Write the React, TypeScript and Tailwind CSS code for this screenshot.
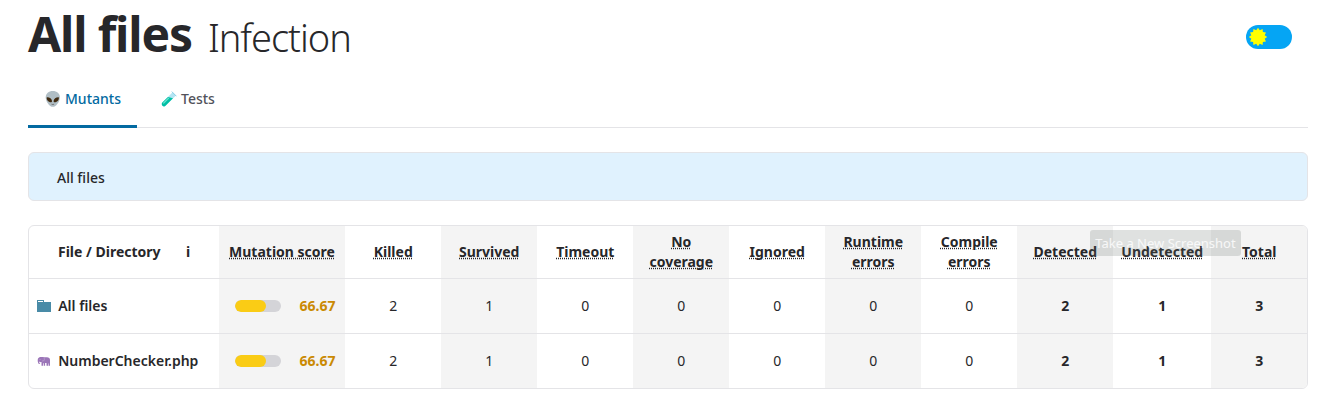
import React from "react";

type Row = { name: string; kind: "folder" | "php"; score: number; counts: number[]; totals: number[] };

const columns = [
  "Killed",
  "Survived",
  "Timeout",
  "No coverage",
  "Ignored",
  "Runtime errors",
  "Compile errors",
  "Detected",
  "Undetected",
  "Total",
];

const rows: Row[] = [
  { name: "All files", kind: "folder", score: 66.67, counts: [2, 1, 0, 0, 0, 0, 0], totals: [2, 1, 3] },
  { name: "NumberChecker.php", kind: "php", score: 66.67, counts: [2, 1, 0, 0, 0, 0, 0], totals: [2, 1, 3] },
];

const gridCols = "grid grid-cols-[190px_126px_repeat(8,96px)_98px_96px]";

function AlienIcon() {
  return (
    <svg width="16" height="16" viewBox="0 0 16 16" aria-hidden="true">
      <path d="M7.800 0C3.700 0 .700 2.700.700 6.400c0 3.800 3.700 9.400 7.100 9.400s7.100-5.600 7.100-9.400C14.900 2.700 11.900 0 7.800 0Z" fill="#b0bec5" />
      <path d="M1.700 6.400C4 6 6.800 7.600 7 10c.1 1.400-1.200 1.600-2.500 1C2.600 10.100 1.500 8.400 1.700 6.400Z" fill="#402a10" />
      <path d="M13.900 6.400C11.600 6 8.800 7.600 8.600 10c-.1 1.400 1.200 1.600 2.500 1 1.900-.9 3-2.600 2.800-4.600Z" fill="#402a10" />
      <path d="M6.500 13.200q1.300.7 2.600 0" fill="none" stroke="#5f5550" strokeWidth=".7" />
    </svg>
  );
}

function TubeIcon() {
  return (
    <svg width="16" height="16" viewBox="0 0 16 16" aria-hidden="true">
      <path d="M11.400 1.400 14.700 4.700 4.500 14.800c-2 1.800-5-1-3.200-3.200Z" fill="#b3e5f3" />
      <path d="M7 5.900 12 7.300 4.500 14.800c-2 1.800-5-1-3.200-3.200Z" fill="#00bfa5" />
      <path d="M2.700 12 7.500 7.300" stroke="#65e5ce" strokeWidth="1.200" strokeLinecap="round" />
      <path d="M11.100.9 15.200 5" stroke="#80cbe5" strokeWidth="1" strokeLinecap="round" />
    </svg>
  );
}

function FolderIcon() {
  return (
    <svg width="14" height="12" viewBox="0 0 14 12" aria-hidden="true">
      <path d="M0 0h7v2h7v10H0Z" fill="#498ba7" />
      <path d="M1 1.500h5" stroke="#fff" strokeWidth="1" />
    </svg>
  );
}

function ElephantIcon() {
  return (
    <svg width="14" height="12" viewBox="0 0 14 12" aria-hidden="true">
      <path
        d="M3.600 2.100C1.800 2.200.7 3.400.7 5.200c0 1.500.3 2.700 1.200 3.700.6.400 1.400.1 1.300-.6h-.7c-.3-.6-.4-1.200-.2-1.700.6.500 1.500.7 2.200.5v3.600H6V8.200h.7v2.500h1.400V7.900h1.400v2.800h1.500V8.500h.5v2.200H13V5c0-1.800-1.200-2.700-3-2.700H7.400c-1-.3-2.600-.4-3.800-.2Z"
        fill="#9b75b8"
      />
      <path d="M6.800 2.600c.8 1 .8 2.700-.3 3.300-.6.300-1.200.1-1.400-.4" fill="none" stroke="#e2d7ea" strokeWidth=".35" />
      <circle cx="3" cy="4.600" r=".3" fill="#fff" />
    </svg>
  );
}

const sunPoints = Array.from({ length: 24 }, (_, i) => {
  const r = i % 2 ? 6.9 : 9.2;
  const a = (i * Math.PI) / 12;
  return `${9 + r * Math.sin(a)},${9 - r * Math.cos(a)}`;
}).join(" ");

function ThemeSwitch() {
  return (
    <button aria-label="Theme" className="flex h-6 w-[46px] items-center rounded-full bg-[#05a5f4] pl-[2.5px]">
      <svg width="18" height="18" viewBox="0 0 18 18" className="overflow-visible">
        <polygon points={sunPoints} fill="#ffff00" />
      </svg>
    </button>
  );
}

function shade(i: number) {
  return i % 2 ? "bg-[#f4f4f4]" : "";
}

export default function App() {
  return (
    <div className="h-[412px] overflow-hidden bg-white px-7 font-['Noto_Sans',sans-serif] text-sm text-[#27272a] [padding-right:30px]">
      <header className="flex h-[74px] items-start justify-between pr-4">
        <h1 className="flex items-baseline pt-[4px] text-5xl leading-[60px] font-bold tracking-[-0.024em]">
          All files
          <span className="ml-4 text-[38px] font-light tracking-[-0.027em]">Infection</span>
        </h1>
        <div className="pt-[25px]">
          <ThemeSwitch />
        </div>
      </header>

      <nav className="flex h-[54px] border-b border-[#e4e4e7] font-medium">
        <a className="-mb-px flex h-[54px] w-[109px] items-start border-b-[3px] border-[#036aa1] pt-[15px] pl-[17px] text-[#036aa1]">
          <span className="pt-0.5"><AlienIcon /></span>
          <span className="ml-1 leading-5">Mutants</span>
        </a>
        <a className="flex items-start pt-[15px] pl-6 text-[#52525b]">
          <span className="pt-0.5"><TubeIcon /></span>
          <span className="ml-1 leading-5">Tests</span>
        </a>
      </nav>

      <div className="mt-6 flex h-[49px] items-center rounded-md border border-[#e4e4e7] bg-[#e0f2fe] pl-7 font-medium">
        <span className="pt-0.5">All files</span>
      </div>

      <main className="relative mt-6 overflow-hidden rounded-md border border-[#e4e4e7]">
        <div className={`${gridCols} h-[53px] border-b border-[#e4e4e7] text-center font-bold`}>
          <div className="flex items-center pl-[29px]">
            <span>File / Directory</span>
            <span className="ml-[25.3px]">i</span>
          </div>
          <div className="flex items-center justify-center bg-[#f4f4f4]">
            <span className="underline decoration-dotted">Mutation score</span>
          </div>
          {columns.map((c, i) => (
            <div key={c} className={`flex items-center justify-center pr-[7.5px] pl-2 ${shade(i)}`}>
              <span className="underline decoration-dotted">{c}</span>
            </div>
          ))}
        </div>
        {rows.map((r, n) => (
          <div key={r.name} className={`${gridCols} text-center ${n === 0 ? "h-[55px] border-b border-[#e4e4e7]" : "h-[54px]"}`}>
            <div className="flex items-center pl-2 font-semibold">
              {r.kind === "folder" ? <FolderIcon /> : <ElephantIcon />}
              <span className="ml-[7.2px]">{r.name}</span>
            </div>
            <div className="flex items-center bg-[#f4f4f4] pl-4">
              <div className="h-3 w-[46px] overflow-hidden rounded-full bg-[#d4d4d8]">
                <div className="h-full rounded-full bg-[#facc15]" style={{ width: `${r.score}%` }} />
              </div>
              <span className="ml-[18.6px] font-bold text-[#ca8a04]">{r.score}</span>
            </div>
            {r.counts.map((v, i) => (
              <div key={i} className={`flex items-center justify-center pl-[0.5px] ${shade(i)}`}>{v}</div>
            ))}
            {r.totals.map((v, i) => (
              <div key={i} className={`flex items-center justify-center pl-[0.5px] font-bold ${shade(i + 7)}`}>{v}</div>
            ))}
          </div>
        ))}
        <div className="absolute top-[4px] left-[1061px] flex h-[26px] w-[151px] items-center justify-center rounded-[3px] bg-[#606864]/20 pt-px text-[13px] whitespace-nowrap text-white/80">
          Take a New Screenshot
        </div>
      </main>
    </div>
  );
}
